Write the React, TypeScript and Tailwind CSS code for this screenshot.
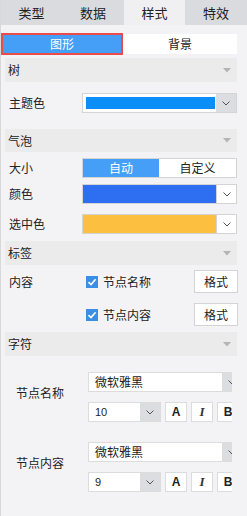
import React from 'react';

const font = "font-['Noto_Sans_CJK_SC','Noto_Sans',sans-serif]";

const Chevron = () => (
  <svg width="8" height="5" viewBox="0 0 8 5" className="block">
    <path d="M0.5 0.5 L4 4 L7.5 0.5" fill="none" stroke="#555" strokeWidth="1" />
  </svg>
);

const SectionHeader: React.FC<{ title: string; className?: string }> = ({ title, className = '' }) => (
  <div className={`ml-[4px] w-[232px] flex items-center justify-between bg-[#ebebeb] pl-[3px] pr-[6px] text-[12px] text-[#222] ${className}`}>
    <span>{title}</span>
    <svg width="8" height="5" viewBox="0 0 8 5" className="block">
      <path d="M0 0 H8 L4 4.5 Z" fill="#b4b4b6" />
    </svg>
  </div>
);

const Label: React.FC<{ children: React.ReactNode }> = ({ children }) => (
  <div className="w-[81px] shrink-0 pl-[8px] text-[12px] text-[#222]">{children}</div>
);

const CheckBox = () => (
  <div className="w-[12px] h-[12px] bg-[#3a8ee6] flex items-center justify-center">
    <svg width="10" height="10" viewBox="0 0 10 10">
      <path d="M1.5 5.2 L4 7.6 L8.6 2.2" fill="none" stroke="#fff" strokeWidth="1.6" />
    </svg>
  </div>
);

const FontGroup: React.FC<{ label: string; size: string; className?: string }> = ({ label, size, className = '' }) => (
  <div className={`flex items-center ${className}`}>
    <div className="w-[87px] shrink-0 pl-[15px] pb-[8px] text-[12px] text-[#222]">{label}</div>
    <div className="w-[144px] overflow-hidden flex flex-col gap-[10px]">
      <div className="w-[155px] h-[20px] shrink-0 flex bg-white border border-[#dcdcdc]">
        <div className="flex-1 flex items-center pl-[6px] text-[12px] text-[#222]">微软雅黑</div>
        <div className="w-[20px] bg-[#dcdde0] flex items-center justify-center">
          <Chevron />
        </div>
      </div>
      <div className="flex items-center h-[20px]">
        <div className="w-[73px] h-[20px] shrink-0 flex bg-white border border-[#dcdcdc]">
          <div className="flex-1 flex items-center pl-[6px] text-[11px] text-[#222] font-['Liberation_Sans',sans-serif]">{size}</div>
          <div className="w-[20px] bg-[#dcdde0] flex items-center justify-center">
            <Chevron />
          </div>
        </div>
        <div className="ml-[4px] w-[22px] h-[20px] shrink-0 bg-white border border-[#dcdcdc] flex items-center justify-center text-[12px] font-black text-[#222] font-['Liberation_Sans',sans-serif]">A</div>
        <div className="ml-[4px] w-[22px] h-[20px] shrink-0 bg-white border border-[#dcdcdc] flex items-center justify-center text-[13px] italic font-bold text-[#333] font-['Liberation_Serif',serif]">I</div>
        <div className="ml-[4px] w-[22px] h-[20px] shrink-0 bg-white border border-[#dcdcdc] flex items-center justify-center text-[12px] font-black text-[#222] font-['Liberation_Sans',sans-serif]">B</div>
      </div>
    </div>
  </div>
);

export default function App() {
  const tabs = [
    { name: '类型', w: 'w-[61px]', active: false },
    { name: '数据', w: 'w-[62px]', active: false },
    { name: '样式', w: 'w-[61px]', active: true },
    { name: '特效', w: 'w-[62px]', active: false },
  ];

  return (
    <div className={`w-[247px] h-[516px] bg-[#f3f3f5] border-l border-[#d8d8da] overflow-hidden ${font}`}>
      {/* Top tabs */}
      <div className="flex h-[25px]">
        {tabs.map((t) => (
          <div
            key={t.name}
            className={`${t.w} flex items-center justify-center text-[13px] text-[#222] ${t.active ? 'bg-[#f0f0f2]' : 'bg-[#dadbde]'}`}
          >
            {t.name}
          </div>
        ))}
      </div>

      {/* Sub tabs */}
      <div className="mt-[8px] flex items-center h-[22px]">
        <div className="w-[122px] h-[22px] border-2 border-[#ea4b4b] bg-[#469ff6] flex items-center justify-center text-[12px] text-white">
          图形
        </div>
        <div className="w-[114px] h-[20px] bg-white flex items-center justify-center text-[12px] text-[#222]">
          背景
        </div>
      </div>

      {/* 树 */}
      <SectionHeader title="树" className="mt-[3px] h-[24px]" />
      <div className="mt-[11px] flex items-center h-[20px]">
        <Label>主题色</Label>
        <div className="w-[155px] h-[20px] flex bg-white border border-[#d4d4d6]">
          <div className="flex-1 p-[3px] pr-[1px]">
            <div className="w-full h-full bg-[#0b8ef7]" />
          </div>
          <div className="w-[20px] bg-[#dcdde0] flex items-center justify-center">
            <Chevron />
          </div>
        </div>
      </div>

      {/* 气泡 */}
      <SectionHeader title="气泡" className="mt-[16px] h-[23px]" />
      <div className="mt-[6px] flex items-center h-[20px]">
        <Label>大小</Label>
        <div className="w-[155px] h-[20px] flex border border-[#d4d4d6] bg-white">
          <div className="w-[76px] bg-[#469ff6] flex items-center justify-center text-[12px] text-white">自动</div>
          <div className="flex-1 flex items-center justify-center text-[12px] text-[#222]">自定义</div>
        </div>
      </div>
      <div className="mt-[6px] flex items-center h-[20px]">
        <Label>颜色</Label>
        <div className="w-[155px] h-[20px] flex bg-white border border-[#d4d4d6]">
          <div className="flex-1 bg-[#2e6ff2]" />
          <div className="w-[20px] border-l border-[#d4d4d6] flex items-center justify-center">
            <Chevron />
          </div>
        </div>
      </div>
      <div className="mt-[10px] flex items-center h-[20px]">
        <Label>选中色</Label>
        <div className="w-[155px] h-[20px] flex bg-white border border-[#d4d4d6]">
          <div className="flex-1 bg-[#fdbf3f]" />
          <div className="w-[20px] border-l border-[#d4d4d6] flex items-center justify-center">
            <Chevron />
          </div>
        </div>
      </div>

      {/* 标签 */}
      <SectionHeader title="标签" className="mt-[7px] h-[24px]" />
      <div className="mt-[5px] flex items-center h-[23px]">
        <div className="w-[85px] shrink-0 pl-[8px] text-[12px] text-[#222]">内容</div>
        <CheckBox />
        <span className="ml-[5px] text-[12px] text-[#222]">节点名称</span>
        <div className="ml-auto mr-[9px] w-[44px] h-[23px] bg-white border border-[#d4d4d6] flex items-center justify-center text-[12px] text-[#222]">格式</div>
      </div>
      <div className="mt-[10px] flex items-center h-[23px]">
        <div className="w-[85px] shrink-0" />
        <CheckBox />
        <span className="ml-[5px] text-[12px] text-[#222]">节点内容</span>
        <div className="ml-auto mr-[9px] w-[44px] h-[23px] bg-white border border-[#d4d4d6] flex items-center justify-center text-[12px] text-[#222]">格式</div>
      </div>

      {/* 字符 */}
      <SectionHeader title="字符" className="mt-[6px] h-[24px]" />
      <FontGroup label="节点名称" size="10" className="mt-[16px]" />
      <FontGroup label="节点内容" size="9" className="mt-[20px]" />
    </div>
  );
}
